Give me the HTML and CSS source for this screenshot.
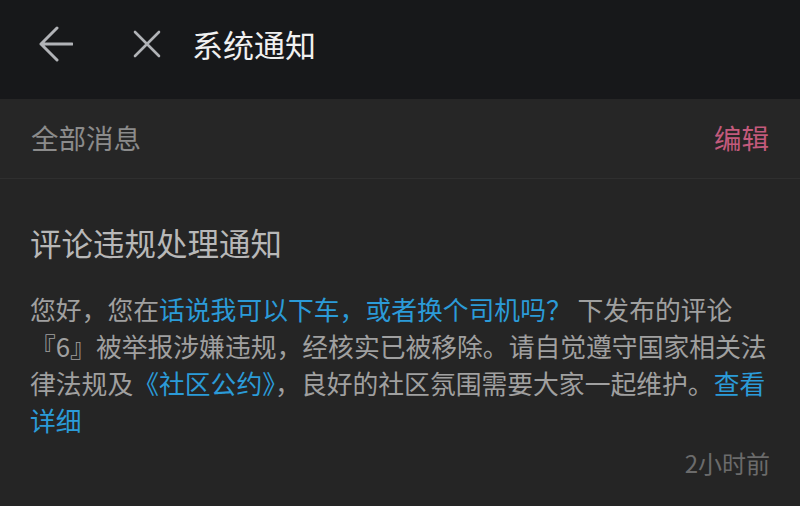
FILE: index.html
```html
<!DOCTYPE html>
<html lang="zh-CN">
<head>
  <meta charset="UTF-8">
  <meta name="viewport" content="width=device-width, initial-scale=1.0">
  <title>系统通知</title>
  <link rel="stylesheet" href="styles.css">
</head>
<body>
  <header class="topbar">
    <button class="icon-btn back-btn" aria-label="返回">
      <svg width="36" height="36" viewBox="0 0 36 36">
        <path d="M4 18 H35 M4 18 L20 2 M4 18 L20 34" fill="none" stroke="#b1b3b7" stroke-width="3" stroke-linecap="round" stroke-linejoin="round"/>
      </svg>
    </button>
    <button class="icon-btn close-btn" aria-label="关闭">
      <svg width="28" height="28" viewBox="0 0 28 28">
        <path d="M2 2 L26 26 M26 2 L2 26" fill="none" stroke="#b1b3b7" stroke-width="2.6" stroke-linecap="round"/>
      </svg>
    </button>
    <h1 class="topbar-title">系统通知</h1>
  </header>

  <!-- filter bar -->
  <div class="filter-bar">
    <span class="filter-label">全部消息</span>
    <a class="edit-link" href="#">编辑</a>
  </div>

  <!-- notification -->
  <div class="notice">
    <h2 class="notice-title">评论违规处理通知</h2>
    <p class="notice-body">您好，您在<a href="#">话说我可以下车，或者换个司机吗？</a> 下发布的评论<br>『6』被举报涉嫌违规，经核实已被移除。请自觉遵守国家相关法律法规及<a href="#">《社区公约》</a>，良好的社区氛围需要大家一起维护。<a href="#">查看详细</a></p>
    <div class="notice-time">2小时前</div>
  </div>
</body>
</html>
```

FILE: styles.css
```css
body {
  margin: 0;
  padding: 0;
  background-color: #252525;
  font-family: 'Noto Sans CJK SC', 'Noto Sans', sans-serif;
  color: #a2a2a2;
}
.topbar {
  display: flex;
  align-items: center;
  height: 99px;
  padding: 0 0 12px 37px;
  background-color: #17181a;
  box-sizing: border-box;
}
.icon-btn {
  display: flex;
  padding: 0;
  border: none;
  background: none;
  cursor: pointer;
}
.back-btn {
  margin-right: 60px;
}
.close-btn {
  margin-right: 31px;
}
.topbar-title {
  margin: 0;
  font-size: 31px;
  font-weight: normal;
  color: #f0f0f0;
  line-height: 40px;
}
.filter-bar {
  display: flex;
  align-items: center;
  justify-content: space-between;
  height: 80px;
  padding: 0 31px 4px 31px;
  background-color: #262626;
  border-bottom: 1px solid #2f2f2f;
  box-sizing: border-box;
  font-size: 27.5px;
}
.filter-label {
  color: #8b8b8b;
}
.edit-link {
  color: #c35a7c;
  text-decoration: none;
}
.notice {
  padding: 43px 30px 0 30px;
}
.notice-title {
  margin: 0;
  font-size: 31.5px;
  font-weight: normal;
  line-height: 40px;
  color: #b8b8b8;
}
.notice-body {
  margin: 28px 0 0;
  font-size: 25.8px;
  line-height: 37px;
  color: #a0a0a0;
}
.notice-body a {
  color: #2b9bd8;
  text-decoration: none;
}
.notice-time {
  margin-top: 10px;
  text-align: right;
  font-size: 24px;
  line-height: 30px;
  color: #6b6b6b;
}
```
